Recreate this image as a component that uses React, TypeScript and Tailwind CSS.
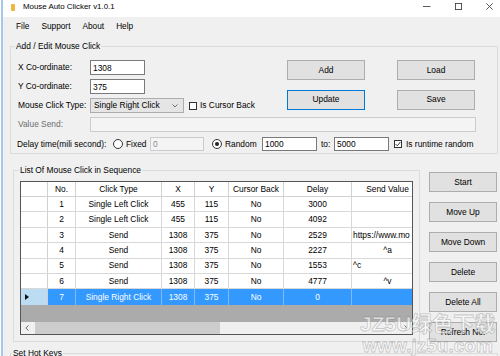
import React from "react";

type Cell = { text: string; align?: "left" | "center" };

const columns = [
  { label: "No.", w: "w-[28px]" },
  { label: "Click Type", w: "w-[86px]" },
  { label: "X", w: "w-[33px]" },
  { label: "Y", w: "w-[34px]" },
  { label: "Cursor Back", w: "w-[55px]" },
  { label: "Delay", w: "w-[68px]" },
  { label: "Send Value", w: "w-[72px]" },
];

const rows: Cell[][] = [
  [{ text: "1" }, { text: "Single Left Click" }, { text: "455" }, { text: "115" }, { text: "No" }, { text: "3000" }, { text: "" }],
  [{ text: "2" }, { text: "Single Left Click" }, { text: "455" }, { text: "115" }, { text: "No" }, { text: "4092" }, { text: "" }],
  [{ text: "3" }, { text: "Send" }, { text: "1308" }, { text: "375" }, { text: "No" }, { text: "2529" }, { text: "https://www.mo", align: "left" }],
  [{ text: "4" }, { text: "Send" }, { text: "1308" }, { text: "375" }, { text: "No" }, { text: "2227" }, { text: "^a" }],
  [{ text: "5" }, { text: "Send" }, { text: "1308" }, { text: "375" }, { text: "No" }, { text: "1553" }, { text: "^c", align: "left" }],
  [{ text: "6" }, { text: "Send" }, { text: "1308" }, { text: "375" }, { text: "No" }, { text: "4777" }, { text: "^v" }],
  [{ text: "7" }, { text: "Single Right Click" }, { text: "1308" }, { text: "375" }, { text: "No" }, { text: "0" }, { text: "" }],
];

function Btn({ label, focused, className = "" }: { label: string; focused?: boolean; className?: string }) {
  return (
    <button
      className={`flex h-[20px] shrink-0 items-center justify-center border bg-[#e1e1e1] text-[8.4px] text-black ${
        focused ? "border-[#0078d7]" : "border-[#adadad]"
      } ${className}`}
    >
      {label}
    </button>
  );
}

function TextBox({ value, width, disabled, h = "h-[15px]" }: { value: string; width: string; disabled?: boolean; h?: string }) {
  return (
    <input
      readOnly
      value={value}
      className={`${width} ${h} shrink-0 border px-[2px] text-[8.4px] outline-none ${
        disabled ? "border-[#cccccc] bg-[#f4f4f4] text-[#8a8a8a]" : "border-[#7a7a7a] bg-white text-black"
      }`}
    />
  );
}

function CheckBox({ checked }: { checked?: boolean }) {
  return (
    <span className="flex h-[8px] w-[8px] shrink-0 items-center justify-center border border-[#333] bg-white">
      {checked && (
        <svg width="6" height="6" viewBox="0 0 6 6">
          <path d="M0.6 3.1 L2.3 4.8 L5.4 1" fill="none" stroke="#222" strokeWidth="0.9" />
        </svg>
      )}
    </span>
  );
}

function Radio({ checked }: { checked?: boolean }) {
  return (
    <span className="flex h-[10px] w-[10px] shrink-0 items-center justify-center rounded-full border border-[#333] bg-white">
      {checked && <span className="h-[4px] w-[4px] rounded-full bg-[#222]" />}
    </span>
  );
}

function TitleBar() {
  return (
    <div className="flex h-[17px] shrink-0 bg-white">
      <div className="flex h-[14px] items-center">
        <span className="ml-[8px] h-[7px] w-[4px] rounded-[1px] bg-[#f2b441]" />
        <span className="ml-[8px] text-[7.9px] text-black">Mouse Auto Clicker v1.0.1</span>
      </div>
      <div className="ml-auto flex items-start gap-[24px] pr-[7px] pt-[3px]">
        <svg width="8" height="7" viewBox="0 0 8 7">
          <path d="M0 3.5 H7.5" stroke="#333" strokeWidth="0.8" />
        </svg>
        <svg width="7" height="7" viewBox="0 0 7 7">
          <rect x="0.4" y="0.4" width="6.2" height="6.2" fill="none" stroke="#333" strokeWidth="0.8" />
        </svg>
        <svg width="7" height="7" viewBox="0 0 7 7">
          <path d="M0.3 0.3 L6.7 6.7 M6.7 0.3 L0.3 6.7" stroke="#333" strokeWidth="0.8" />
        </svg>
      </div>
    </div>
  );
}

function MenuBar() {
  return (
    <div className="flex h-[18px] shrink-0 items-center pl-[7px] text-[8.3px]">
      {["File", "Support", "About", "Help"].map((m) => (
        <span key={m} className="px-[6px]">
          {m}
        </span>
      ))}
    </div>
  );
}

function EditGroup() {
  return (
    <fieldset className="ml-[7px] mt-[6px] w-[488px] shrink-0 border border-[#dcdcdc] text-[8.4px]">
      <legend className="ml-[4px] px-[1px] leading-[10px]">Add / Edit Mouse Click</legend>
      <div className="pb-[2px] pl-[7px] pt-[9px]">
        <div className="flex">
          <div className="flex w-[269px] flex-col gap-[4px]">
            <div className="flex h-[15px] items-center">
              <span className="w-[72px]">X Co-ordinate:</span>
              <TextBox value="1308" width="w-[55px]" />
            </div>
            <div className="flex h-[15px] items-center">
              <span className="w-[72px]">Y Co-ordinate:</span>
              <TextBox value="375" width="w-[55px]" />
            </div>
            <div className="flex h-[15px] items-center">
              <span className="w-[72px]">Mouse Click Type:</span>
              <div className="flex h-[15px] w-[94px] items-center border border-[#adadad] bg-[#e5e5e5] pl-[3px]">
                <span>Single Right Click</span>
                <svg className="ml-auto mr-[5px]" width="6" height="4" viewBox="0 0 6 4">
                  <path d="M0.5 0.5 L3 3 L5.5 0.5" fill="none" stroke="#555" strokeWidth="0.8" />
                </svg>
              </div>
              <span className="ml-[5px]">
                <CheckBox />
              </span>
              <span className="ml-[3px]">Is Cursor Back</span>
            </div>
          </div>
          <div className="grid grid-cols-[78px_78px] gap-x-[32px] gap-y-[6px]">
            <Btn label="Add" />
            <Btn label="Load" />
            <Btn label="Update" focused />
            <Btn label="Save" />
          </div>
        </div>
        <div className="mt-[4px] flex h-[15px] items-center">
          <span className="w-[72px] text-[#6d6d6d]">Value Send:</span>
          <TextBox value="" width="w-[386px]" disabled />
        </div>
        <div className="mt-[5px] flex h-[14px] items-center">
          <span className="ml-[-1px] w-[96px]">Delay time(mili second):</span>
          <Radio />
          <span className="ml-[3px] w-[24px]">Fixed</span>
          <TextBox value="0" width="w-[54px]" h="h-[14px]" disabled />
          <span className="ml-[8px]">
            <Radio checked />
          </span>
          <span className="ml-[3px] w-[37px]">Random</span>
          <TextBox value="1000" width="w-[55px]" h="h-[14px]" />
          <span className="ml-[4px] w-[13px]">to:</span>
          <TextBox value="5000" width="w-[55px]" h="h-[14px]" />
          <span className="ml-[5px]">
            <CheckBox checked />
          </span>
          <span className="ml-[4px]">Is runtime random</span>
        </div>
      </div>
    </fieldset>
  );
}

function Grid() {
  return (
    <div className="flex h-[154px] w-[393px] flex-col overflow-hidden border border-[#555] bg-white text-[8.4px]">
      <div className="flex h-[15px] shrink-0 border-b border-[#d0d0d0]">
        <div className="w-[27px] shrink-0 border-r border-[#d0d0d0]" />
        {columns.map((c) => (
          <div
            key={c.label}
            className={`${c.w} flex shrink-0 items-center justify-center whitespace-nowrap border-r border-[#d0d0d0]`}
          >
            {c.label}
          </div>
        ))}
      </div>
      {rows.map((r, i) => {
        const selected = i === rows.length - 1;
        return (
          <div
            key={i}
            className={`flex h-[15.4px] shrink-0 ${selected ? "" : "border-b border-[#d8d8d8]"}`}
          >
            <div
              className={`flex w-[27px] shrink-0 items-center border-r border-[#d0d0d0] pl-[4px] ${
                selected ? "bg-[#bcdcf4]" : "bg-white"
              }`}
            >
              {selected && (
                <svg width="4" height="6" viewBox="0 0 4 6">
                  <path d="M0 0 L4 3 L0 6 Z" fill="#111" />
                </svg>
              )}
            </div>
            {r.map((cell, j) => (
              <div
                key={j}
                className={`${columns[j].w} flex shrink-0 items-center overflow-hidden whitespace-nowrap border-r ${
                  cell.align === "left" ? "justify-start pl-[1px]" : "justify-center"
                } ${selected ? "border-[#7fbaf5] bg-[#3399ff] text-white" : "border-[#d8d8d8]"}`}
              >
                {cell.text}
              </div>
            ))}
          </div>
        );
      })}
      <div className="flex-1 bg-[#ababab]" />
      <div className="flex h-[12px] shrink-0 items-center bg-[#f0f0f0]">
        <svg className="ml-[4px]" width="4" height="6" viewBox="0 0 4 6">
          <path d="M3.5 0.5 L0.8 3 L3.5 5.5" fill="none" stroke="#606060" strokeWidth="0.9" />
        </svg>
        <div className="ml-[6px] h-full w-[185px] bg-[#cdcdcd]" />
        <svg className="ml-auto mr-[4px]" width="4" height="6" viewBox="0 0 4 6">
          <path d="M0.5 0.5 L3.2 3 L0.5 5.5" fill="none" stroke="#606060" strokeWidth="0.9" />
        </svg>
      </div>
    </div>
  );
}

function ListGroup() {
  return (
    <fieldset className="ml-[10px] w-[407px] shrink-0 border border-[#dcdcdc] text-[8.4px]">
      <legend className="ml-[5px] px-[1px] leading-[10px]">List Of Mouse Click in Sequence</legend>
      <div className="px-[6px] pb-[3px] pt-[6px]">
        <Grid />
      </div>
    </fieldset>
  );
}

function SideButtons() {
  return (
    <div className="ml-[9px] mt-[7px] flex w-[68px] shrink-0 flex-col gap-[10px]">
      {["Start", "Move Up", "Move Down", "Delete", "Delete All", "Refresh No."].map((b) => (
        <Btn key={b} label={b} />
      ))}
    </div>
  );
}

function Watermark() {
  return (
    <div className="pointer-events-none absolute left-[360px] top-[313px] flex flex-col items-center whitespace-nowrap font-['Liberation_Sans','Noto_Sans_CJK_SC',sans-serif] font-bold leading-none text-[rgba(255,255,255,0.6)] [-webkit-text-stroke:0.8px_rgba(120,120,120,0.4)]">
      <span className="text-[21px]">JZ5U绿色下载</span>
      <span className="mt-[2px] text-[19px]">www.jz5u.com</span>
    </div>
  );
}

export default function App() {
  return (
    <div className="relative flex h-[356px] w-[500px] overflow-hidden bg-white font-['Liberation_Sans',Arial,sans-serif] text-black">
      <div className="ml-[1px] w-[2px] shrink-0 bg-[#a6c8ea]" />
      <div className="flex min-w-0 flex-1 flex-col bg-[#f0f0f0]">
        <TitleBar />
        <MenuBar />
        <EditGroup />
        <div className="mt-[11px] flex shrink-0">
          <ListGroup />
          <SideButtons />
        </div>
        <fieldset className="ml-[7px] mt-[6px] h-[40px] w-[488px] shrink-0 border border-[#dcdcdc] text-[8.4px]">
          <legend className="ml-[1px] px-[1px] leading-[10px]">Set Hot Keys</legend>
        </fieldset>
      </div>
      <Watermark />
    </div>
  );
}
